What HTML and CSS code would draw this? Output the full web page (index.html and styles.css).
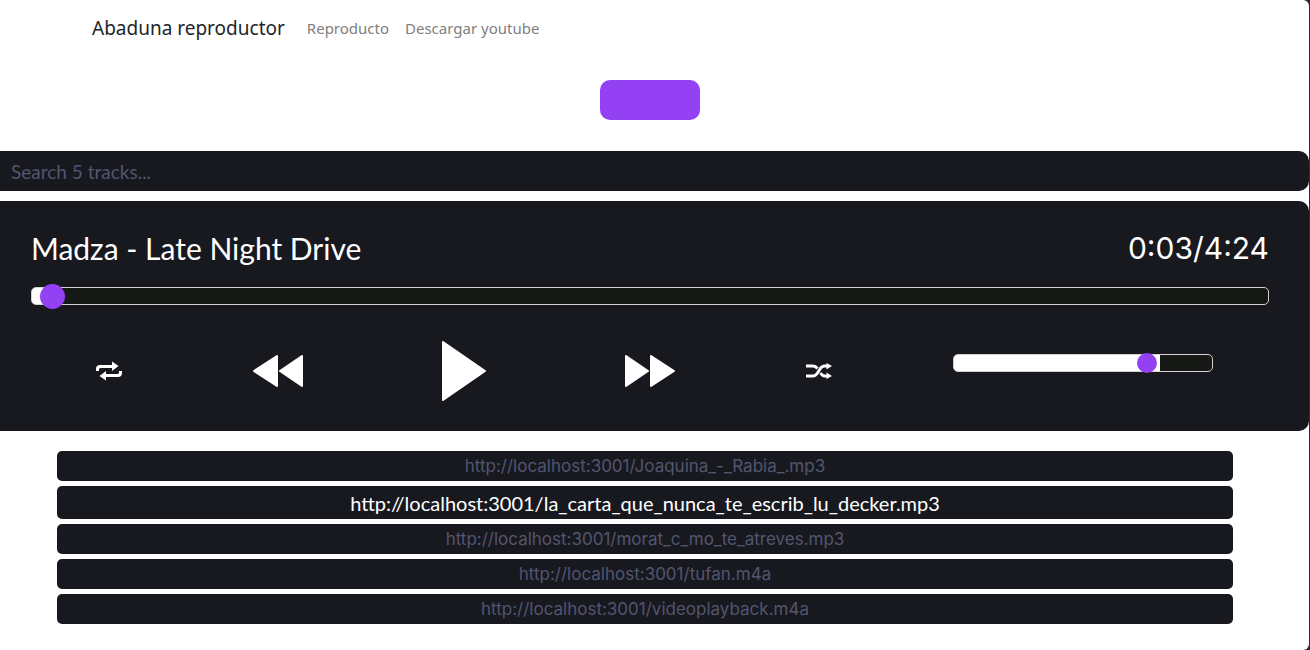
FILE: index.html
```html
<!DOCTYPE html>
<html lang="es">
<head>
<meta charset="utf-8">
<meta name="viewport" content="width=device-width, initial-scale=1">
<title>Abaduna reproductor</title>
<link rel="stylesheet" href="styles.css">
</head>
<body>
<div class="page">
  <nav class="navbar">
    <a class="brand" href="#">Abaduna reproductor</a>
    <a class="nav-link" href="#">Reproducto</a>
    <a class="nav-link" href="#">Descargar youtube</a>
  </nav>
  <div class="upload">
    <button class="upload-button" type="button" aria-label="Cargar"></button>
  </div>
  <input class="search" type="text" placeholder="Search 5 tracks..." aria-label="Search tracks">
  <section class="player">
    <div class="info">
      <h1 class="title">Madza - Late Night Drive</h1>
      <div class="time">0:03/4:24</div>
    </div>
    <input class="range progress" type="range" min="0" max="1000" value="7" aria-label="Progress">
    <div class="controls">
      <button class="control" type="button" aria-label="Repeat">
        <svg width="26" height="20" viewBox="0 0 26 20"><path d="M0 10V8Q0 4 4 4H16V0.500L22.500 5L16 10V7H4.500Q3 7 3 8.500V10ZM26 10V12Q26 16 22 16H10V19.500L3.500 15L10 10V13H21.500Q23 13 23 11.500V10Z"/></svg>
      </button>
      <button class="control" type="button" aria-label="Previous">
        <svg width="50" height="32" viewBox="0 0 50 32"><path class="round" d="M24 1V31L1 16ZM49 1V31L27 16Z"/></svg>
      </button>
      <button class="control" type="button" aria-label="Play">
        <svg width="46" height="60" viewBox="0 0 46 60"><path class="round" d="M2 1V59L44 30Z"/></svg>
      </button>
      <button class="control" type="button" aria-label="Next">
        <svg width="50" height="32" viewBox="0 0 50 32"><path class="round" d="M1 1V31L23 16ZM26 1V31L49 16Z"/></svg>
      </button>
      <button class="control" type="button" aria-label="Shuffle">
        <svg width="26" height="16" viewBox="0 0 26 16"><path class="line" d="M0 3H7Q9.500 3 11.500 5.500M0 13H7Q9.500 13 11.500 10L14 6Q16 3 18.500 3H22M14.500 10Q16.500 13 18.500 13H22"/><path d="M20.500 0L26 3L20.500 6.500ZM20.500 9.500L26 13L20.500 16Z"/></svg>
      </button>
      <div class="volume-cell">
        <input class="range volume" type="range" min="0" max="100" value="77" aria-label="Volume">
      </div>
    </div>
  </section>
  <ul class="tracks">
    <li><button class="track" type="button">http://localhost:3001/Joaquina_-_Rabia_.mp3</button></li>
    <li><button class="track active" type="button">http://localhost:3001/la_carta_que_nunca_te_escrib_lu_decker.mp3</button></li>
    <li><button class="track" type="button">http://localhost:3001/morat_c_mo_te_atreves.mp3</button></li>
    <li><button class="track" type="button">http://localhost:3001/tufan.m4a</button></li>
    <li><button class="track" type="button">http://localhost:3001/videoplayback.m4a</button></li>
  </ul>
</div>
</body>
</html>
```
FILE: styles.css
```css
* { box-sizing: border-box; }
body { margin: 0; background: #2d2d2f; font-family: "Open Sans", sans-serif; }
button { border: 0; font: inherit; cursor: pointer; }
.page { min-height: 100vh; margin-right: 1px; background: #fff; border-radius: 0 6px 6px 0; }
.navbar { display: flex; align-items: center; height: 56px; padding: 0 92px; }
.brand { margin-right: 22px; color: #212529; font-family: "Noto Sans", sans-serif; font-size: 19px; text-decoration: none; }
.nav-link { margin-right: 16px; color: #808080; font-family: "Noto Sans", sans-serif; font-size: 15px; text-decoration: none; }
.upload { display: flex; justify-content: center; padding: 24px 9px 31px 0; }
.upload-button { width: 100px; height: 40px; border-radius: 10px; background: #9440f3; }
.search { display: block; width: 100%; height: 40px; padding: 0 11px; border: 0; border-radius: 0 10px 10px 0; background: #18191f; color: #fff; font-family: Lato, sans-serif; font-size: 19px; }
.search::placeholder { color: #53556f; opacity: 1; }
.player { margin-top: 10px; padding: 26px 40px 10px 31px; border-radius: 0 10px 10px 0; background: #18191f; color: #fff; }
.info { display: flex; align-items: center; justify-content: space-between; height: 42px; }
.title { margin: 0; font-family: Lato, sans-serif; font-size: 30px; font-weight: 400; }
.time { font-family: Inter, sans-serif; font-size: 30px; }
.range { display: block; height: 18px; margin: 0; border: 1px solid #d3d3d3; border-radius: 5px; appearance: none; }
.progress { width: 100%; margin-top: 18px; background: linear-gradient(to right, #fff 1%, #161815 1%); }
.volume { width: 70%; background: linear-gradient(to right, #fff 80%, #161815 80%); }
.range::-webkit-slider-thumb { appearance: none; width: 20px; height: 20px; border-radius: 50%; background: #9440f3; }
.progress::-webkit-slider-thumb { width: 25px; height: 25px; }
.controls { display: grid; grid-template-columns: 156fr 182fr 190fr 182fr 156fr 372fr; align-items: center; height: 100px; margin-top: 16px; }
.control { display: flex; justify-content: center; padding: 0; background: none; }
.control svg { fill: #fff; }
.round { stroke: #fff; stroke-width: 2; stroke-linejoin: round; }
.line { fill: none; stroke: #fff; stroke-width: 3; }
.volume-cell { display: flex; justify-content: center; padding-bottom: 16px; }
.tracks { display: grid; gap: 5px; margin: 0; padding: 20px 76px 26px 57px; list-style: none; }
.track { display: block; width: 100%; height: 30px; padding: 0; border-radius: 5px; background: #18191f; color: #53556f; font-family: Inter, sans-serif; font-size: 17px; line-height: 28px; text-align: center; }
.active { height: 33px; color: #fff; font-family: Lato, sans-serif; font-size: 20px; }
```
